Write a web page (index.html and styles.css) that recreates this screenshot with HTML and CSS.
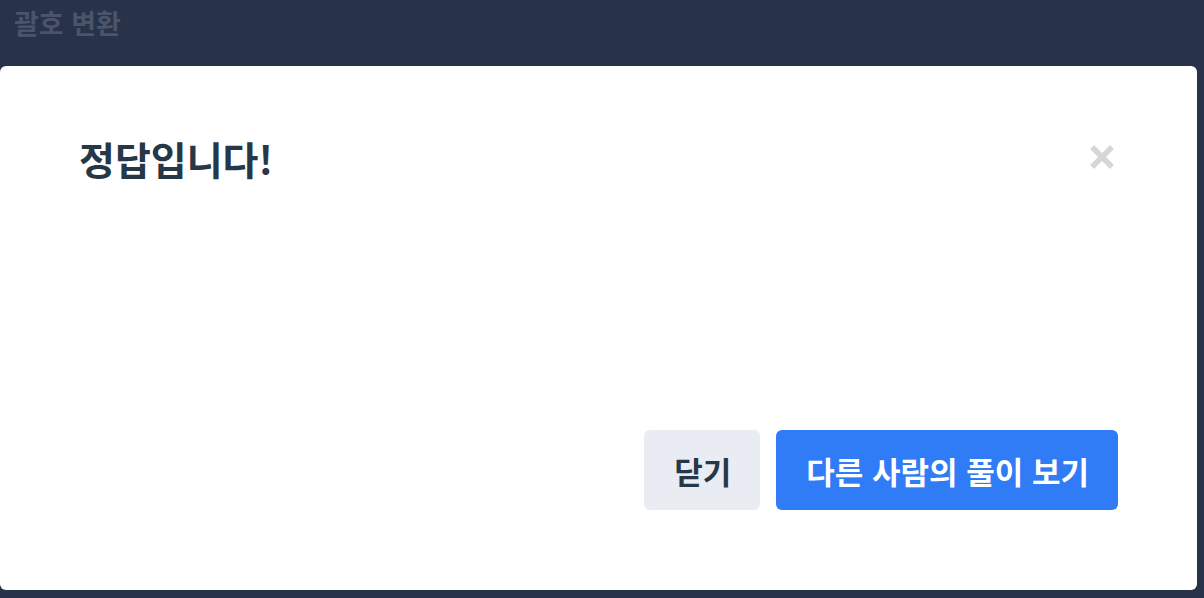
FILE: index.html
```html
<!DOCTYPE html>
<html lang="ko">
<head>
  <meta charset="UTF-8">
  <meta name="viewport" content="width=device-width, initial-scale=1.0">
  <title>괄호 변환</title>
  <link rel="stylesheet" href="styles.css">
</head>
<body>
  <div class="page-title">괄호 변환</div>

  <div class="modal">
    <div class="modal-header">
      <h2 class="modal-title">정답입니다!</h2>
      <button class="modal-close" aria-label="닫기">
        <svg width="26" height="26" viewBox="0 0 26 26">
          <path d="M5 5 L21 21 M21 5 L5 21" stroke="#d6d6d6" stroke-width="5.5" stroke-linecap="square" fill="none"/>
        </svg>
      </button>
    </div>
    <div class="modal-body"></div>
    <div class="modal-footer">
      <button class="btn btn-light">닫기</button>
      <button class="btn btn-primary">다른 사람의 풀이 보기</button>
    </div>
  </div>
</body>
</html>
```

FILE: styles.css
```css
html, body {
  height: 100%;
}
body {
  margin: 0;
  background-color: #283249;
  font-family: "Noto Sans CJK KR", "Noto Sans", sans-serif;
  overflow: hidden;
}
.page-title {
  padding: 4px 14px 0;
  height: 66px;
  box-sizing: border-box;
  font-size: 27px;
  font-weight: 700;
  color: #4a546a;
  line-height: 38px;
}
.modal {
  width: 1197px;
  height: 524px;
  box-sizing: border-box;
  background: #fff;
  border-radius: 6px;
  padding: 68px 79px 80px;
  display: flex;
  flex-direction: column;
}
.modal-header {
  display: flex;
  justify-content: space-between;
  align-items: flex-start;
}
.modal-title {
  margin: 0;
  font-size: 39px;
  font-weight: 700;
  color: #263747;
  line-height: 48px;
}
.modal-close {
  background: none;
  border: none;
  padding: 0;
  margin-top: 10px;
  margin-right: 3px;
  cursor: pointer;
  line-height: 0;
}
.modal-body {
  flex: 1;
}
.modal-footer {
  display: flex;
  justify-content: flex-end;
  gap: 16px;
}
.btn {
  height: 80px;
  border: none;
  border-radius: 6px;
  padding: 0 29px 0 30px;
  font-family: inherit;
  font-size: 31px;
  font-weight: 700;
  cursor: pointer;
}
.btn-light {
  background-color: #e9ecf3;
  color: #263747;
}
.btn-primary {
  background-color: #2f7cf6;
  color: #fff;
}
```
